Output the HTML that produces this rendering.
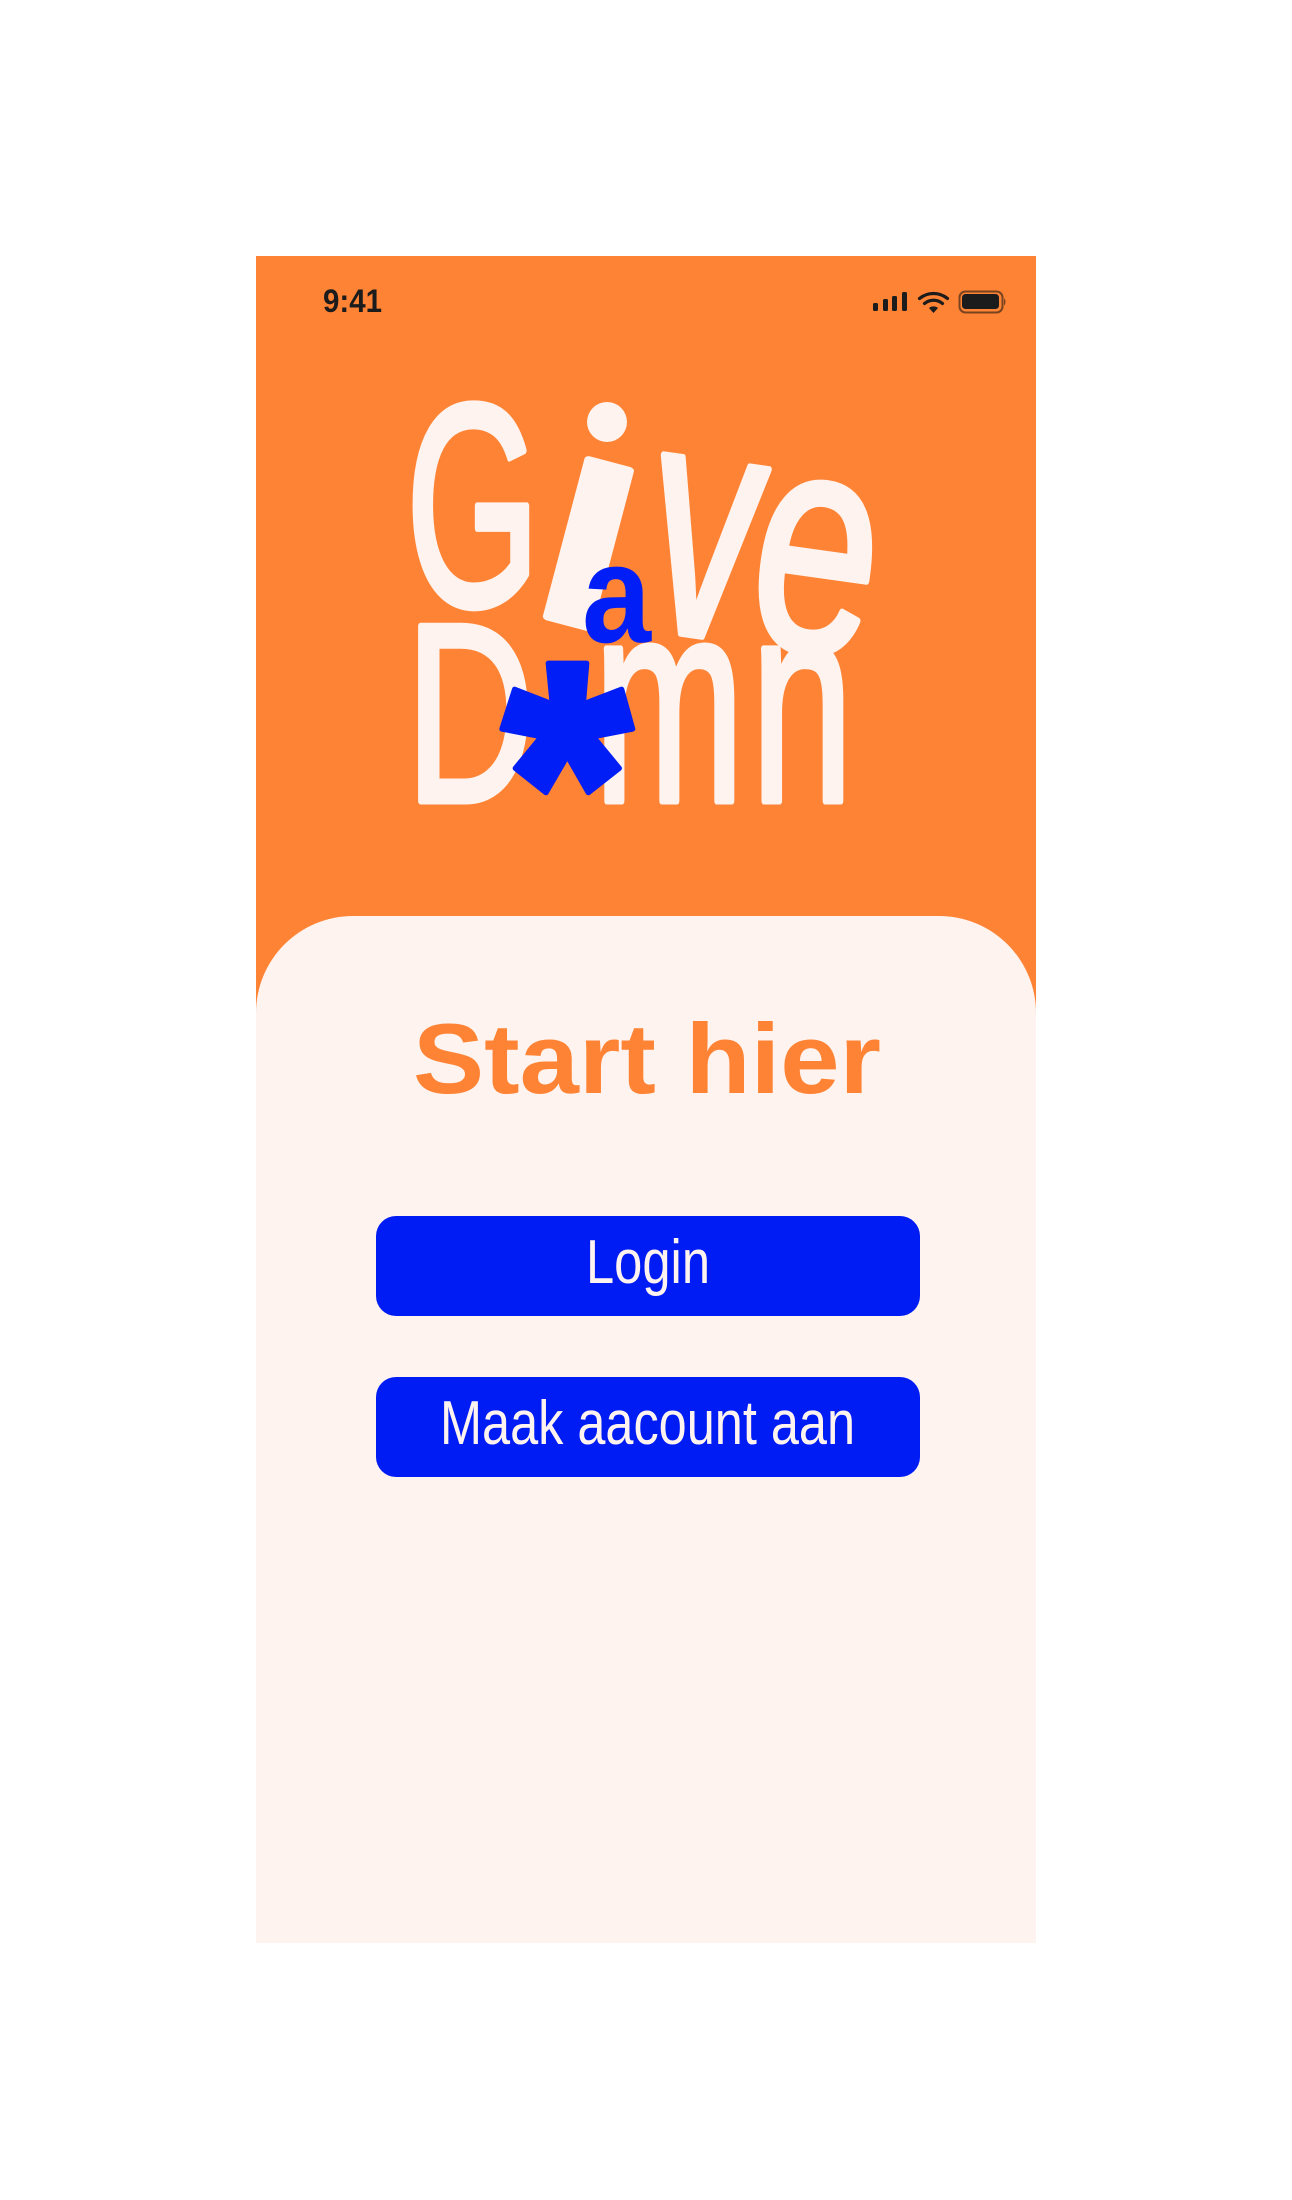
<!DOCTYPE html>
<html><head><meta charset="utf-8"><style>
html,body{margin:0;padding:0;background:#fff;}
svg{display:block;}
</style></head><body>
<svg width="1292" height="2200" viewBox="0 0 1292 2200" xmlns="http://www.w3.org/2000/svg" font-family="'Liberation Sans', sans-serif">
<rect x="0" y="0" width="1292" height="2200" fill="#ffffff"/>
<rect x="256" y="256" width="780" height="1687" fill="#FF8334"/>
<path d="M256 1943 V1013 A97 97 0 0 1 353 916 H939 A97 97 0 0 1 1036 1013 V1943 Z" fill="#FEF3EE"/>
<!-- status bar -->
<text x="323" y="312" font-size="32" font-weight="bold" fill="#1c1c1c" textLength="59" lengthAdjust="spacingAndGlyphs">9:41</text>
<g fill="#1c1c1c">
<rect x="873" y="303" width="5" height="8" rx="1.5"/>
<rect x="883" y="299" width="5" height="12" rx="1.5"/>
<rect x="892" y="296" width="5" height="15" rx="1.5"/>
<rect x="902" y="292" width="5" height="19" rx="1.5"/>
</g>
<g fill="none" stroke="#1c1c1c" stroke-width="3.2" stroke-linecap="round">
<path d="M919.5 298.5 A22 22 0 0 1 947.5 298.5"/>
<path d="M924.5 303.5 A14 14 0 0 1 942.5 303.5"/>
</g>
<path d="M929 308 A7 7 0 0 1 938 308 L933.5 313 Z" fill="#1c1c1c"/>
<rect x="959.5" y="291.5" width="43" height="21" rx="6" fill="none" stroke="#7a4320" stroke-width="2"/>
<rect x="962" y="294" width="37" height="15" rx="3.5" fill="#1c1c1c"/>
<path d="M1004 298 Q1007 301.5 1004 306 Z" fill="#7a4320"/>
<!-- logo -->
<g fill="#FEF3EE" stroke="#FEF3EE" stroke-width="7" stroke-linejoin="round">
<text x="406" y="605" font-size="288" textLength="134" lengthAdjust="spacingAndGlyphs">G</text>
<text transform="translate(555,619) rotate(14.8) scale(1.5,1)" x="-34" y="0" font-size="308">ı</text>
<text transform="translate(693,635) rotate(8) scale(0.66,1)" x="-84" y="0" font-size="330">v</text>
<text transform="translate(805,650) rotate(8) scale(0.72,1)" x="-88" y="0" font-size="312">e</text>
<text x="406" y="801" font-size="254" textLength="128" lengthAdjust="spacingAndGlyphs">D</text>
<text x="594" y="801" font-size="288" textLength="150" lengthAdjust="spacingAndGlyphs">m</text>
<text x="751" y="801" font-size="288" textLength="102" lengthAdjust="spacingAndGlyphs">n</text>
</g>
<circle cx="607" cy="422" r="20" fill="#FEF3EE"/>
<text x="582" y="642" font-size="140" font-weight="bold" fill="#001EF5" textLength="69" lengthAdjust="spacingAndGlyphs">a</text>
<polygon transform="translate(380,380) scale(0.3333)" fill="#001EF5" stroke="#001EF5" stroke-width="16" stroke-linejoin="round"
points="505,850 620,850 610,972 725,928 758,1047 640,1070 718,1165 625,1238 562,1128 498,1238 406,1165 484,1070 366,1047 404,928 517,972"/>
<!-- sheet content -->
<text x="413" y="1093" font-size="99" font-weight="bold" fill="#FF8334" textLength="468" lengthAdjust="spacingAndGlyphs">Start hier</text>
<rect x="376" y="1216" width="544" height="100" rx="20" fill="#001CF5"/>
<text x="586" y="1283" font-size="62" fill="#FEF3EE" textLength="124" lengthAdjust="spacingAndGlyphs">Login</text>
<rect x="376" y="1377" width="544" height="100" rx="20" fill="#001CF5"/>
<text x="440" y="1444" font-size="62" fill="#FEF3EE" textLength="415" lengthAdjust="spacingAndGlyphs">Maak aacount aan</text>
</svg>
</body></html>
